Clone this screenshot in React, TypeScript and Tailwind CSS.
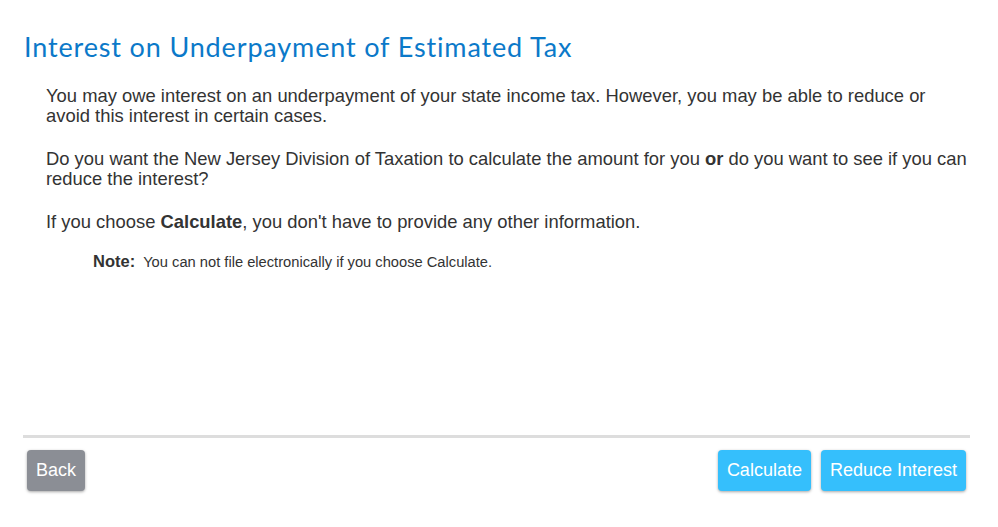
import React from 'react';

export default function App() {
  return (
    <div className="w-[998px] h-[527px] bg-white pl-[23px] pr-[28px] pt-[31px] font-['Liberation_Sans',Arial,sans-serif] text-[#333333]">
      {/* Title */}
      <h1 className="font-['Lato',sans-serif] text-[27px] tracking-[0.85px] leading-[32px] text-[#0b79c9] pl-px">
        Interest on Underpayment of Estimated Tax
      </h1>

      {/* Body */}
      <div className="pl-[23px] pt-[23px] h-[370px] text-[18.4px] leading-[20px]">
        <p>
          You may owe interest on an underpayment of your state income tax. However, you may be able to reduce or
          avoid this interest in certain cases.
        </p>
        <p className="mt-[23px]">
          Do you want the New Jersey Division of Taxation to calculate the amount for you <b>or</b> do you want to see
          if you can reduce the interest?
        </p>
        <p className="mt-[23px]">
          If you choose <b>Calculate</b>, you don't have to provide any other information.
        </p>
        <p className="mt-[19px] pl-[47px] flex items-baseline gap-[8px]">
          <b className="text-[16.5px]">Note:</b>
          <span className="text-[14.7px]">You can not file electronically if you choose Calculate.</span>
        </p>
      </div>

      {/* Footer */}
      <div className="border-t-[3px] border-[#dddddd] mt-[2px] pt-[12px] flex items-center justify-between pl-[4px] pr-[4px]">
        <button
          type="button"
          className="h-[41px] px-[9px] rounded-[4px] bg-[#8b8e95] text-white text-[18px] shadow-[0_1px_3px_rgba(0,0,0,0.35)]"
        >
          Back
        </button>
        <div className="flex gap-[10px]">
          <button
            type="button"
            className="h-[41px] px-[9px] rounded-[4px] bg-[#35bffc] text-white text-[18px] shadow-[0_1px_3px_rgba(0,0,0,0.35)]"
          >
            Calculate
          </button>
          <button
            type="button"
            className="h-[41px] px-[9px] rounded-[4px] bg-[#35bffc] text-white text-[18px] shadow-[0_1px_3px_rgba(0,0,0,0.35)]"
          >
            Reduce Interest
          </button>
        </div>
      </div>
    </div>
  );
}
